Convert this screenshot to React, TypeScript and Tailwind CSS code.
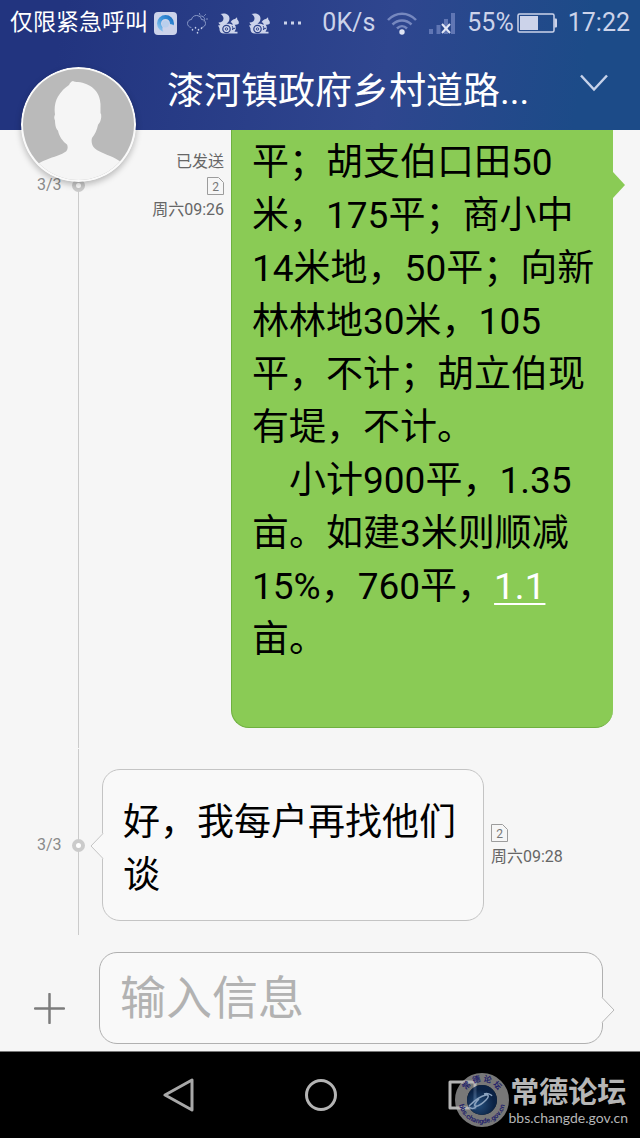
import type { ReactNode } from "react";

const ROW_TEXT = "text-[37px] leading-[53px] text-black whitespace-pre";

function BrowserIcon() {
  return (
    <svg width="23" height="23" viewBox="0 0 23 23" aria-hidden="true">
      <defs>
        <linearGradient id="ring" x1="0" y1="1" x2="1" y2="0">
          <stop offset="0" stopColor="#8ec4ee" />
          <stop offset="0.5" stopColor="#3f97dc" />
          <stop offset="1" stopColor="#1d72c4" />
        </linearGradient>
      </defs>
      <rect width="23" height="23" rx="4" fill="#ccd3ea" />
      <circle cx="11.5" cy="11.5" r="6.5" fill="none" stroke="url(#ring)" strokeWidth="4" />
      <path d="M9 14a4 4 0 0 1 6.500-2c2.500 0 4.500 1 5.500 2.500V21H11c-2 0-3.500-4-2-7z" fill="#ccd3ea" />
      <circle cx="11.5" cy="12" r="3.500" fill="#b9cfec" />
    </svg>
  );
}

function RainIcon() {
  return (
    <svg width="21" height="21" viewBox="0 0 21 21" fill="none" stroke="#8a9ac8" strokeWidth="1" strokeLinecap="round" aria-hidden="true">
      <path d="M4 14.500C1.500 14 .5 12 .5 10.500.5 8 2.500 6.500 4.500 6.500 5 4 7 2.500 9.500 2.500c2.500 0 4.500 1.500 5 4 2.500 0 4 1.500 4 4 0 2-1.500 3.500-3.500 4" />
      <path d="M12 3.500c1.500-1 4-.5 5 1s.8 2.500.2 3.500M12.500.5l.3 1M18.500 1.500l-1 1M20.500 6h-1" />
      <path d="M5.500 16.500v.5M8.500 14.500v.5M11.500 16.500v.5M14.500 15v.5M10.500 19.500v.5" stroke="#c3cce8" strokeWidth="1.500" />
    </svg>
  );
}

function SquirrelIcon() {
  return (
    <svg width="21" height="21" viewBox="0 0 21 21" aria-hidden="true">
      <path
        fill="#ccd3ea"
        d="M2.500 1C6.500-.5 11.500 1 11.500 5.500c0 2.500-1.500 4-3 5.500 2-.5 4.500-.3 6 1 .3-1.500-.5-2.500-2-2.800 1-2 2.800-3 4.500-3.200L19 4.200l.3 2.300c1.200.8 1.700 2.500 1.500 4-1.300 1.300-3 1.200-4.300 1.200 1 1 1.500 2.300 1.500 4l-1.500 3h3v1.800H6C3 20.500 1.200 18.500 1.500 15.500 1 14.500.8 13.500 0 12.500c1 0 2-.2 2.500-.5C1.500 11.500.8 10.500.5 9.500 3.500 9.500 5.500 8 5.500 5.500 5.500 3.500 4.300 2 2.500 1z"
      />
      <circle cx="8.500" cy="16" r="3.700" fill="none" stroke="#2b4088" strokeWidth="1.200" />
      <circle cx="8.500" cy="16" r="1.200" fill="none" stroke="#2b4088" strokeWidth="0.900" />
      <path fill="none" stroke="#2b4088" d="M14 13c1 1 1 2.500.5 4M14.500 16l3-1" />
    </svg>
  );
}

function WifiIcon() {
  return (
    <svg width="30" height="23" viewBox="0 0 30 23" fill="none" stroke="#7688bf" strokeWidth="2.500" aria-hidden="true">
      <path d="M1 8C9-.5 21-.5 29 8M5.500 12.500c5.500-5.500 13.500-5.500 19 0M10 16.500c3-3 7-3 10 0" />
      <circle cx="15" cy="20" r="2.700" fill="#dfe4f4" stroke="none" />
    </svg>
  );
}

function SignalIcon() {
  return (
    <svg width="26" height="23" viewBox="0 0 26 23" aria-hidden="true">
      <path d="M0 17h4v5H0zM7.500 13h4v9h-4zM15 7h4v15h-4zM22 1h4v21h-4z" fill="#6076b4" />
      <path d="m13 12 8 9m0-9-8 9" stroke="#e2e7f5" strokeWidth="2" />
    </svg>
  );
}

function BatteryIcon() {
  return (
    <svg width="40" height="20" viewBox="0 0 40 20" aria-hidden="true">
      <rect x="1" y="1" width="36" height="18" rx="1.500" fill="none" stroke="#ccd3ea" strokeWidth="1.500" />
      <rect x="3" y="3" width="18" height="14" fill="#ccd3ea" />
      <path d="M37.500 5.500H39a1 1 0 0 1 1 1v7a1 1 0 0 1-1 1h-1.500z" fill="#ccd3ea" />
    </svg>
  );
}

function StatusBar() {
  return (
    <div className="flex h-[46px] items-center justify-between px-[10px] text-[25px] text-[#ccd3ea]">
      <div className="flex items-center gap-[10px]">
        <div className="flex items-center gap-[6px]">
          <span className="text-[23px] text-white">仅限紧急呼叫</span>
          <BrowserIcon />
        </div>
        <RainIcon />
        <SquirrelIcon />
        <SquirrelIcon />
        <svg width="22" height="4" viewBox="0 0 22 4" fill="#ccd3ea" aria-hidden="true">
          <path d="M4 .5h3v3H4zM11 .5h3v3h-3zM18 .5h3v3h-3z" />
        </svg>
      </div>
      <div className="flex items-center gap-3">
        <span>0K/s</span>
        <WifiIcon />
        <SignalIcon />
        <div className="flex items-center gap-[3px]">
          <span>55%</span>
          <BatteryIcon />
        </div>
        <span className="-ml-px">17:22</span>
      </div>
    </div>
  );
}

function Avatar() {
  return (
    <svg
      viewBox="0 0 115 115"
      className="absolute left-[21px] top-[67px] z-10 size-[115px] rounded-full shadow-[0_3px_6px_rgba(0,0,0,0.25)]"
      role="img"
      aria-label="头像"
    >
      <defs>
        <clipPath id="face">
          <circle cx="57.5" cy="57.5" r="55.5" />
        </clipPath>
      </defs>
      <circle cx="57.5" cy="57.5" r="57.5" fill="#fafafa" />
      <g clipPath="url(#face)">
        <rect width="115" height="115" fill="#bababa" />
        <path
          fill="#f5f5f5"
          d="M48 18c1-2 2-3.500 4-4 1 1 3 .8 5 1 6 .5 12 3 16 7 4 3.500 6 9 6.500 15v9c1.500 2 .5 7-.5 9-1 1.500-1.500 2-2 3-1 5-3 9-6 13-1 3 0 7 1.500 9 3 4 13 7.500 19 10 4 2 7 4 10 6v29H12V100c3-3 9-5.500 14-7.500 6-2.500 15-5 19-8 2-2 2-5 1-7-4-3-8-8-9-14-2-1-3-6-3-10-1-2-1-4 0-6-1-6 0-13 3-18 3-5 7-9 11-11.500z"
        />
      </g>
    </svg>
  );
}

function Header() {
  return (
    <header className="relative h-[130px] bg-linear-[100deg,#22347f_10%,#2f468f_60%,#1c4b88_90%]">
      <StatusBar />
      <div className="flex h-[84px] items-center justify-between pl-[167px] pr-8 pt-1.5">
        <h1 className="text-[37px] leading-[53px] text-white">漆河镇政府乡村道路...</h1>
        <button type="button" aria-label="展开" className="mb-4">
          <svg width="28" height="18" viewBox="0 0 28 18" fill="none" stroke="#c6d2ea" strokeWidth="2.500">
            <path d="m1 1.500 13 14 13-14" />
          </svg>
        </button>
      </div>
      <Avatar />
    </header>
  );
}

function SimCard() {
  return (
    <svg width="17" height="18" viewBox="0 0 17 18" aria-label="卡2">
      <path d="M.5.5h11l5 5v12H.5z" fill="none" stroke="#9c9c9c" />
      <text x="8.500" y="14" textAnchor="middle" fontSize="12" fill="#777">
        2
      </text>
    </svg>
  );
}

// Left rail with the part counter, the dot and the vertical thread line
function Rail({ className }: { className: string }) {
  return (
    <div className="relative flex w-[102px] shrink-0 justify-center">
      <div className={`absolute bottom-0 left-[78px] w-px bg-[#cbcbcb] ${className}`} />
      <RailLabel />
    </div>
  );
}

function RailLabel() {
  return (
    <div className="relative mt-[43px] flex h-6 w-full items-center gap-[10px] pl-[37px] text-base text-[#8a8a8a] group-data-[kind=received]:mt-[85px]">
      <span>3/3</span>
      <span className="size-[13px] rounded-full border-4 border-[#cbcbcb] bg-white" />
    </div>
  );
}

function Message({ kind, children }: { kind: "sent" | "received"; children: ReactNode }) {
  return (
    <article data-kind={kind} className="group flex">
      {children}
    </article>
  );
}

function Chat() {
  return (
    <main className="flex-1">
      <Message kind="sent">
        <Rail className="top-[56px]" />
        <div className="flex w-[129px] shrink-0 flex-col items-end pr-[7px] pt-[20px] text-base leading-6 text-[#666]">
          <span>已发送</span>
          <span className="flex h-6 items-center">
            <SimCard />
          </span>
          <time>周六09:26</time>
        </div>
        <div className="relative mb-5 mr-[27px] flex-1 rounded-b-[18px] border-b border-l border-[#6fb03f] bg-[#8acb55] pb-[61px] pl-5 pt-[6px]">
          <p className={ROW_TEXT}>
            平；胡支伯口田50
            <br />
            米，175平；商小中
            <br />
            14米地，50平；向新
            <br />
            林林地30米，105
            <br />
            平，不计；胡立伯现
            <br />
            有堤，不计。
          </p>
          <p className={ROW_TEXT}>
            {"\u3000小计900平，1.35"}
            <br />
            亩。如建3米则顺减
            <br />
            15%，760平，
            <a href="#1.1" className="text-white underline decoration-2 underline-offset-4">
              1.1
            </a>
            <br />
            亩。
          </p>
          <svg className="absolute -right-3 top-[42px]" width="12" height="26" viewBox="0 0 12 26" aria-hidden="true">
            <path d="M0 0l12 13L0 26z" fill="#8acb55" />
          </svg>
        </div>
      </Message>
      <Message kind="received">
        <Rail className="top-px" />
        <div className="relative mb-[14px] mt-[21px] flex-1 rounded-[18px] border border-[#c4c4c4] bg-[#f9f9f9] pb-[18px] pl-5 pt-[26px]">
          <p className={ROW_TEXT}>
            好，我每户再找他们
            <br />谈
          </p>
          <svg className="absolute -left-[13px] top-[63px]" width="14" height="26" viewBox="0 0 14 26" aria-hidden="true">
            <path d="M14 0h-1L1 13l12 13h1z" fill="#f9f9f9" />
            <path d="M13 0.500 1 13l12 12.500" fill="none" stroke="#c4c4c4" />
          </svg>
        </div>
        <div className="flex w-[156px] shrink-0 flex-col pl-[7px] pt-[73px] text-base leading-6 text-[#666]">
          <span className="flex h-6 items-center">
            <SimCard />
          </span>
          <time>周六09:28</time>
        </div>
      </Message>
    </main>
  );
}

function Composer() {
  return (
    <form className="flex items-center border-b border-[#777] pb-[7px] pr-[37px] pt-4">
      <button type="button" aria-label="添加" className="flex w-[99px] justify-center pt-5">
        <svg width="31" height="31" viewBox="0 0 31 31" stroke="#7c7c7c" strokeWidth="2.500" strokeLinecap="round">
          <path d="M15.500 1v29M1 15.500h29" />
        </svg>
      </button>
      <div className="relative flex-1">
        <input
          type="text"
          aria-label="输入信息"
          placeholder="输入信息"
          className="h-[92px] w-full rounded-[18px] border border-[#b0b0b0] bg-[#f9f9f9] px-5 text-[46px] outline-none placeholder:text-[#b2b2b2]"
        />
        <svg className="absolute -right-3 top-[45px]" width="14" height="26" viewBox="0 0 14 26" aria-hidden="true">
          <path d="M0 0h1l12 13L1 26H0z" fill="#f9f9f9" />
          <path d="M1 0.500 13 13 1 25.500" fill="none" stroke="#b8b8b8" />
        </svg>
      </div>
    </form>
  );
}

function Watermark() {
  return (
    <div className="absolute bottom-[9px] right-3 flex items-center text-[#b6b6b6]">
      <svg width="54" height="56" viewBox="0 0 54 56" aria-hidden="true">
        <defs>
          <radialGradient id="globe" cx="0.4" cy="0.65">
            <stop offset="0" stopColor="#2d6099" />
            <stop offset="1" stopColor="#0d2a55" />
          </radialGradient>
          <path id="top" d="M8.500 27a18.500 18.500 0 0 1 37 0" />
          <path id="bottom" d="M3.500 27a23.500 23.500 0 0 0 47 0" />
        </defs>
        <circle cx="27" cy="27" r="21" fill="none" stroke="#b8b8b8" strokeOpacity="0.65" strokeWidth="12" />
        <circle cx="27" cy="27" r="15" fill="url(#globe)" fillOpacity="0.8" />
        <path
          d="M14 33c5-5 12-10 17-11 3-.5 3 2 0 5-4 4-9 7-11 6-1-1 1-4 4-7M29 21c3-1 7 0 8 2M21 34c-2 2-5 2-7 0"
          fill="none"
          stroke="#8ca3bf"
          strokeWidth="1.500"
        />
        <text fontSize="8" fontWeight="700" fill="#23236a">
          <textPath href="#top" startOffset="50%" textAnchor="middle">常  德  论  坛</textPath>
        </text>
        <text fontSize="7" fontWeight="700" fill="#23236a">
          <textPath href="#bottom" startOffset="50%" textAnchor="middle">bbs.changde.gov.cn</textPath>
        </text>
      </svg>
      <div className="flex flex-col items-center">
        <span className="text-[29px] font-bold leading-[34px]">常德论坛</span>
        <span className="font-['Lato',sans-serif] text-[14px] leading-4">bbs.changde.gov.cn</span>
      </div>
    </div>
  );
}

function NavBar() {
  return (
    <nav className="relative flex h-[86px] items-center justify-center bg-black">
      <button type="button" aria-label="返回" className="flex w-[142px] justify-center">
        <svg width="32" height="34" viewBox="0 0 32 34" fill="none" stroke="#a8a8a8" strokeWidth="3" strokeLinejoin="round">
          <path d="M30 2v30L3 17z" />
        </svg>
      </button>
      <button type="button" aria-label="主页" className="flex w-[142px] justify-center">
        <svg width="34" height="34" viewBox="0 0 34 34" fill="none" stroke="#b4b4b4" strokeWidth="3">
          <circle cx="18" cy="17" r="14.500" />
        </svg>
      </button>
      <button type="button" aria-label="最近任务" className="flex w-[142px] justify-center">
        <svg width="30" height="30" viewBox="0 0 30 30" fill="none" stroke="#b4b4b4" strokeWidth="3" strokeLinejoin="round">
          <path d="M3 2h25v26H3z" />
        </svg>
      </button>
      <Watermark />
    </nav>
  );
}

export default function App() {
  return (
    <div className="flex min-h-screen flex-col bg-[#f6f6f6] font-[Roboto,'Noto_Sans_CJK_SC',sans-serif]">
      <Header />
      <Chat />
      <Composer />
      <NavBar />
    </div>
  );
}
